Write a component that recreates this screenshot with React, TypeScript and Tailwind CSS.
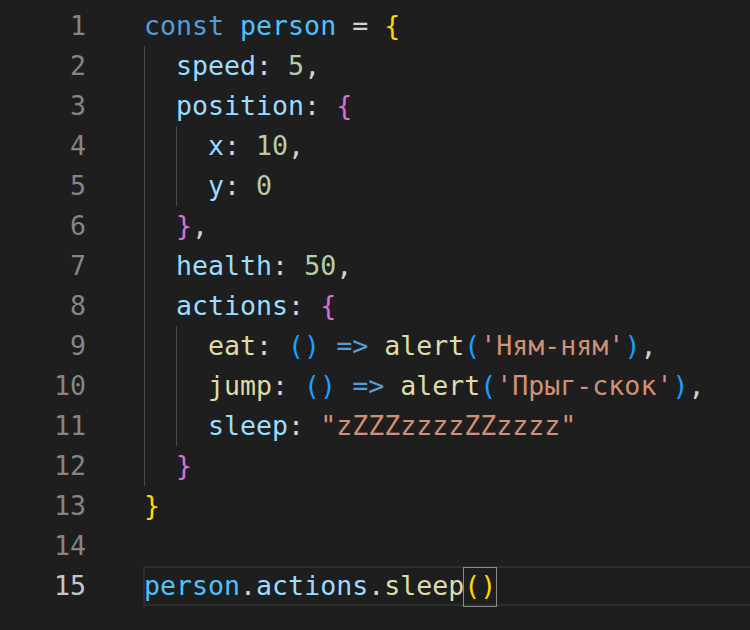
import React from "react"

type Tok = [string, string]

const kw = "text-[#569cd6]"
const cv = "text-[#4fc1ff]"
const op = "text-[#d4d4d4]"
const b1 = "text-[#ffd700]"
const b2 = "text-[#da70d6]"
const b3 = "text-[#179fff]"
const prop = "text-[#9cdcfe]"
const num = "text-[#b5cea8]"
const fn = "text-[#dcdcaa]"
const str = "text-[#ce9178]"

// indent = number of indent levels (each 2 spaces) that get a guide
const lines: { indent: number; toks: Tok[] }[] = [
  { indent: 0, toks: [["const", kw], [" ", op], ["person", cv], [" = ", op], ["{", b1]] },
  { indent: 1, toks: [["speed", prop], [": ", op], ["5", num], [",", op]] },
  { indent: 1, toks: [["position", prop], [": ", op], ["{", b2]] },
  { indent: 2, toks: [["x", prop], [": ", op], ["10", num], [",", op]] },
  { indent: 2, toks: [["y", prop], [": ", op], ["0", num]] },
  { indent: 1, toks: [["}", b2], [",", op]] },
  { indent: 1, toks: [["health", prop], [": ", op], ["50", num], [",", op]] },
  { indent: 1, toks: [["actions", prop], [": ", op], ["{", b2]] },
  {
    indent: 2,
    toks: [["eat", fn], [": ", op], ["()", b3], [" ", op], ["=>", kw], [" ", op], ["alert", fn], ["(", b3], ["'Ням-ням'", str], [")", b3], [",", op]],
  },
  {
    indent: 2,
    toks: [["jump", fn], [": ", op], ["()", b3], [" ", op], ["=>", kw], [" ", op], ["alert", fn], ["(", b3], ["'Прыг-скок'", str], [")", b3], [",", op]],
  },
  { indent: 2, toks: [["sleep", prop], [": ", op], ['"zZZZzzzzZZzzzz"', str]] },
  { indent: 1, toks: [["}", b2]] },
  { indent: 0, toks: [["}", b1]] },
  { indent: 0, toks: [] },
]

export default function App() {
  return (
    <div
      className="w-[750px] h-[630px] overflow-hidden bg-[#1e1e1e] pt-[6px] text-[26.6px] whitespace-pre"
      style={{ fontFamily: '"DejaVu Sans Mono", "Liberation Mono", monospace' }}
    >
      <div className="flex">
        {/* Gutter */}
        <div className="w-[86px] shrink-0 text-right text-[#858585] leading-[40px]">
          {lines.map((_, i) => (
            <div key={i} className="h-[40px]">
              {i + 1}
            </div>
          ))}
          <div className="h-[40px] text-[#c6c6c6]">15</div>
        </div>

        {/* Code */}
        <div className="w-[640px] shrink-0 ml-[57px] leading-[40px]">
          {lines.map((line, i) => (
            <div key={i} className="h-[40px] pl-[1px] flex">
              {Array.from({ length: line.indent }).map((_, j) => (
                <span key={j} className="inline-block w-[2ch] h-[40px] border-l border-[#474747]" />
              ))}
              <span>
                {line.toks.map(([t, c], k) => (
                  <span key={k} className={c}>
                    {t}
                  </span>
                ))}
              </span>
            </div>
          ))}
          <div className="h-[40px] pl-[1px] ring-2 ring-inset ring-[#2c2c2c]">
            <span className={cv}>person</span>
            <span className={op}>.</span>
            <span className={prop}>actions</span>
            <span className={op}>.</span>
            <span className={fn}>sleep</span>
            <span className="inline-block align-top mt-[2px] h-[38px] leading-[36px] outline outline-1 outline-[#8b8b8b] text-[#ffd700]">()</span>
          </div>
        </div>
      </div>
    </div>
  )
}
